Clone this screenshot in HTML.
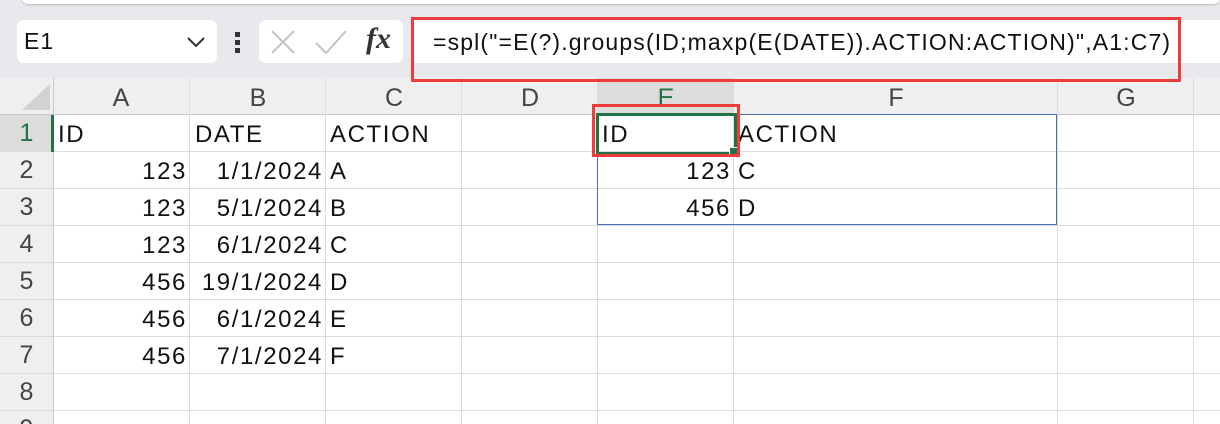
<!DOCTYPE html><html><head><style>
html,body{margin:0;width:1220px;height:424px;overflow:hidden}
body{background:#fff;font-family:"Liberation Sans",sans-serif;position:relative}
.a{position:absolute}
.t{position:absolute;font-size:24px;line-height:37px;color:#111;white-space:nowrap;letter-spacing:1.6px}
.r{text-align:right}
.vl{position:absolute;top:78px;width:1px;height:346px;background:#dcdcdc}
.hl{position:absolute;left:0;width:1220px;height:1px;background:#dcdcdc}
.ch{position:absolute;top:78px;height:37px;line-height:40px;font-size:25px;color:#444;text-align:center}
.rh{position:absolute;left:0;width:53px;height:37px;line-height:37px;font-size:25px;color:#444;text-align:center}
</style></head><body>
<div class="a" style="left:0;top:0;width:1220px;height:78px;background:#e9e8ec"></div>
<div class="a" style="left:22px;top:-8px;width:1198px;height:12px;background:#fff;border-radius:6px;box-shadow:0 1px 2px #bbb"></div>
<div class="a" style="left:17px;top:20px;width:200px;height:43px;background:#fff;border-radius:7px"></div>
<div class="t" style="left:24px;top:23px;font-size:23px;letter-spacing:1px">E1</div>
<svg class="a" style="left:186px;top:36px" width="20" height="12"><path d="M2 2 L10 10 L18 2" fill="none" stroke="#333" stroke-width="2"/></svg>
<div class="a" style="left:235px;top:32px;width:5px;height:5px;background:#333"></div>
<div class="a" style="left:235px;top:40px;width:5px;height:5px;background:#333"></div>
<div class="a" style="left:235px;top:48px;width:5px;height:5px;background:#333"></div>
<div class="a" style="left:259px;top:20px;width:144px;height:43px;background:#fff;border-radius:7px"></div>
<svg class="a" style="left:270px;top:29px" width="30" height="26"><path d="M2 2 L24 24 M24 2 L2 24" stroke="#c4c4c4" stroke-width="2"/></svg>
<svg class="a" style="left:314px;top:29px" width="34" height="26"><path d="M2 14 L12 24 L32 2" fill="none" stroke="#c4c4c4" stroke-width="2"/></svg>
<div class="a" style="left:366px;top:22px;font-family:'Liberation Serif',serif;font-style:italic;font-weight:bold;font-size:30px;color:#333">fx</div>
<div class="a" style="left:411px;top:20px;width:809px;height:43px;background:#fff"></div>
<div class="t" style="left:433px;top:24px;font-size:23px;letter-spacing:1.15px">=spl("=E(?).groups(ID;maxp(E(DATE)).ACTION:ACTION)",A1:C7)</div>
<div class="a" style="left:0;top:78px;width:1220px;height:37px;background:#efefef"></div>
<div class="a" style="left:0;top:78px;width:53px;height:346px;background:#efefef"></div>
<div class="a" style="left:598px;top:78px;width:136px;height:37px;background:#dcdcdc"></div>
<div class="a" style="left:0;top:115px;width:53px;height:37px;background:#dcdcdc"></div>
<svg class="a" style="left:20px;top:82px" width="32" height="30"><path d="M30 2 L30 28 L2 28 Z" fill="#d2d2d2"/></svg>
<div class="hl" style="top:114px;background:#c8c8c8"></div>
<div class="hl" style="top:151px"></div><div class="hl" style="top:188px"></div><div class="hl" style="top:225px"></div><div class="hl" style="top:262px"></div><div class="hl" style="top:299px"></div><div class="hl" style="top:336px"></div><div class="hl" style="top:373px"></div><div class="hl" style="top:410px"></div>
<div class="vl" style="left:53px;background:#c8c8c8"></div>
<div class="vl" style="left:189px"></div><div class="vl" style="left:325px"></div><div class="vl" style="left:461px"></div><div class="vl" style="left:597px"></div><div class="vl" style="left:733px"></div><div class="vl" style="left:1057px"></div><div class="vl" style="left:1193px"></div>
<div class="ch" style="left:53px;width:136px">A</div><div class="ch" style="left:190px;width:136px">B</div><div class="ch" style="left:326px;width:136px">C</div><div class="ch" style="left:462px;width:136px">D</div><div class="ch" style="left:598px;width:136px;color:#217346">E</div><div class="ch" style="left:734px;width:324px">F</div><div class="ch" style="left:1058px;width:136px">G</div>
<div class="rh" style="top:115px;color:#217346">1</div><div class="rh" style="top:152px">2</div><div class="rh" style="top:189px">3</div><div class="rh" style="top:226px">4</div><div class="rh" style="top:263px">5</div><div class="rh" style="top:300px">6</div><div class="rh" style="top:337px">7</div><div class="rh" style="top:374px">8</div>
<div class="rh" style="top:411px;height:13px;overflow:hidden;line-height:37px">9</div>
<div class="a" style="left:51px;top:115px;width:3px;height:37px;background:#217346"></div>
<div class="t" style="left:58px;top:116px">ID</div><div class="t" style="left:195px;top:116px">DATE</div><div class="t" style="left:330px;top:116px">ACTION</div>
<div class="t r" style="left:53px;width:134px;top:153px">123</div><div class="t r" style="left:190px;width:133px;top:153px">1/1/2024</div><div class="t" style="left:330px;top:153px">A</div>
<div class="t r" style="left:53px;width:134px;top:190px">123</div><div class="t r" style="left:190px;width:133px;top:190px">5/1/2024</div><div class="t" style="left:330px;top:190px">B</div>
<div class="t r" style="left:53px;width:134px;top:227px">123</div><div class="t r" style="left:190px;width:133px;top:227px">6/1/2024</div><div class="t" style="left:330px;top:227px">C</div>
<div class="t r" style="left:53px;width:134px;top:264px">456</div><div class="t r" style="left:190px;width:133px;top:264px">19/1/2024</div><div class="t" style="left:330px;top:264px">D</div>
<div class="t r" style="left:53px;width:134px;top:301px">456</div><div class="t r" style="left:190px;width:133px;top:301px">6/1/2024</div><div class="t" style="left:330px;top:301px">E</div>
<div class="t r" style="left:53px;width:134px;top:338px">456</div><div class="t r" style="left:190px;width:133px;top:338px">7/1/2024</div><div class="t" style="left:330px;top:338px">F</div>
<div class="a" style="left:597px;top:114px;width:460px;height:111px;border:1px solid #4a6fb5;box-sizing:border-box"></div>
<div class="t" style="left:602px;top:116px">ID</div><div class="t" style="left:738px;top:116px">ACTION</div>
<div class="t r" style="left:598px;width:133px;top:153px">123</div><div class="t" style="left:738px;top:153px">C</div>
<div class="t r" style="left:598px;width:133px;top:190px">456</div><div class="t" style="left:738px;top:190px">D</div>
<div class="a" style="left:596px;top:113px;width:135px;height:36px;border:3px solid #217346"></div>
<div class="a" style="left:729px;top:147px;width:7px;height:7px;background:#217346;border:1px solid #fff"></div>
<div class="a" style="left:592px;top:104px;width:142px;height:47px;border:3px solid #ee3b3b"></div>
<div class="a" style="left:411px;top:17px;width:764px;height:59px;border:3px solid #ee3b3b"></div>
</body></html>
